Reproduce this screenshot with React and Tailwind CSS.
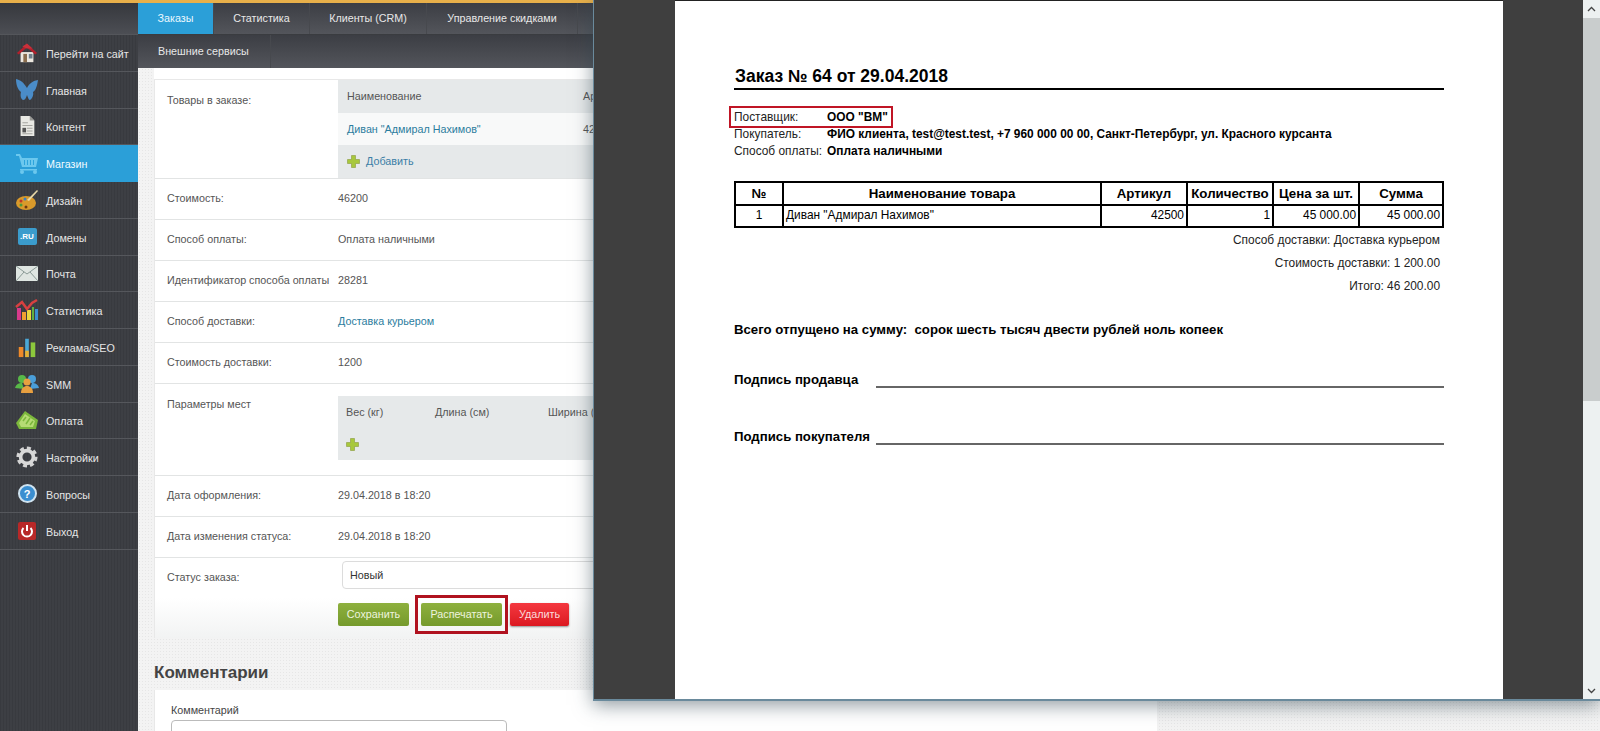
// App.jsx
import React from "react";

const IconHome = () => (
  <svg width="22" height="22" viewBox="0 0 24 24">
    <path d="M5 11h14v11H5z" fill="#ece8e0" />
    <path d="M1 12 12 2l11 10-2 1.500L12 6l-9 7.500z" fill="#b3202c" />
    <path d="M7 5 12 1.500 18 7l-6 0z" fill="#c9303a" />
    <path d="M8 13h4v9H8z" fill="#8a6d4d" />
    <path d="M14 13h4v5h-4z" fill="#6f7f8c" />
  </svg>
);

const IconButterfly = () => (
  <svg width="24" height="24" viewBox="0 0 24 24">
    <path d="M1 1c5 1 8 4 11 9 2-4 5-7 11-8-1 6-2 10-5 12 1 3-1 7-3 8-1 0-2-2-3-5-1 3-2 5-4 5-2-1-3-4-2-8C3 12 1 7 1 1z" fill="#4a8cc8" />
  </svg>
);

const IconDoc = () => (
  <svg width="20" height="22" viewBox="0 0 20 24">
    <path d="M3 1h10l5 5v17H3z" fill="#e9e9e4" />
    <path d="M13 1l5 5h-5z" fill="#9a9a96" />
    <path d="M5 8h6v1H5zM5 11h11v1H5zM10 14h6v1h-6zM10 17h6v1h-6zM5 20h11v1H5z" fill="#a5a5a0" />
    <path d="M5 14h4v5H5z" fill="#555" />
  </svg>
);

const IconCart = () => (
  <svg width="24" height="24" viewBox="0 0 24 24">
    <path d="M1 3h4l2 4h16l-2 9H7L4 5H1z" fill="#6cc8ee" />
    <path d="M9 9h1v5H9zM12 9h1v5h-1zM15 9h1v5h-1zM18 9h1v5h-1z" fill="#2ea4dc" />
    <path d="M5 18h17v1.500H5z" fill="#6cc8ee" />
    <circle cx="7" cy="21" r="2" fill="#6cc8ee" />
    <circle cx="20" cy="21" r="2" fill="#6cc8ee" />
  </svg>
);

const IconPalette = () => (
  <svg width="24" height="24" viewBox="0 0 24 24">
    <ellipse cx="11" cy="15" rx="10" ry="7" fill="#d99a2b" />
    <circle cx="6" cy="13" r="1.500" fill="#c0392b" />
    <circle cx="10" cy="11" r="1.500" fill="#3c7fc0" />
    <circle cx="6" cy="17" r="1.500" fill="#4b9b3c" />
    <circle cx="11" cy="19" r="1.500" fill="#6d3b12" />
    <path d="M22 2l1 1-9 10-2-1z" fill="#e8d8a8" />
  </svg>
);

const IconRu = () => (
  <div className="flex h-[17px] w-[19px] items-center justify-center rounded-[2px] bg-[#3b9ccc] text-[8px] font-bold text-white">.RU</div>
);

const IconMail = () => (
  <svg width="22" height="16" viewBox="0 0 22 16">
    <path d="M0 1h22v15H0z" fill="#dfe6e2" />
    <path d="M0 1l11 8 11-8M0 16l8-9M22 16l-8-9" fill="none" stroke="#8a9a96" strokeWidth="1" />
  </svg>
);

const IconStats = () => (
  <svg width="24" height="24" viewBox="0 0 24 24">
    <path d="M2 10h4v12H2z" fill="#d83a8c" />
    <path d="M7 14h4v8H7z" fill="#f0a030" />
    <path d="M12 12h4v10h-4z" fill="#e8d840" />
    <path d="M17 9h2v13h-2z" fill="#60b040" />
    <path d="M20 11h3v11h-3z" fill="#3a8ed0" />
    <path d="M1 9l6-5 5 7 5-6 5-3" fill="none" stroke="#d84040" strokeWidth="2.500" />
  </svg>
);

const IconBars = () => (
  <svg width="20" height="22" viewBox="0 0 20 24">
    <path d="M1 12h5v11H1z" fill="#ee8a2a" />
    <path d="M8 3h4v20H8z" fill="#4aa8d8" />
    <path d="M14 7h5v16h-5z" fill="#8cc83c" />
    <path d="M8 16h4v7H8z" fill="#e8b030" />
  </svg>
);

const IconPeople = () => (
  <svg width="24" height="20" viewBox="0 0 24 20">
    <circle cx="7" cy="5" r="4" fill="#58b848" />
    <circle cx="17" cy="5" r="4" fill="#4a9ed8" />
    <path d="M0 14c1-4 4-5 7-5l2 6z" fill="#58b848" />
    <path d="M24 14c-1-4-4-5-7-5l-2 6z" fill="#4a9ed8" />
    <circle cx="12" cy="8" r="3.500" fill="#e8a040" />
    <path d="M6 19c0-5 3-7 6-7s6 2 6 7z" fill="#e8a040" />
  </svg>
);

const IconMoney = () => (
  <svg width="22" height="20" viewBox="0 0 22 20">
    <path d="M0 13 9 1l13 9-2 9H3z" fill="#7cb83c" />
    <path d="M3 13l6-9 10 7-2 6H5z" fill="#b6dc74" />
    <path d="M7 11l3-4M10 14l4-6M14 15l3-4" fill="none" stroke="#7cb83c" strokeWidth="1.500" />
  </svg>
);

const IconGear = () => (
  <svg width="22" height="22" viewBox="0 0 24 24">
    <circle cx="12" cy="12" r="9" fill="none" stroke="#d4d4d4" strokeWidth="5" strokeDasharray="4 3" />
    <circle cx="12" cy="12" r="7" fill="none" stroke="#d8d8d8" strokeWidth="4" />
  </svg>
);

const IconHelp = () => (
  <div className="flex h-[19px] w-[19px] items-center justify-center rounded-full border-2 border-[#cfe3f0] bg-[#3a8ed0] text-[11px] font-bold text-white">?</div>
);

const IconPower = () => (
  <svg width="20" height="20" viewBox="0 0 20 20">
    <rect x="1" y="1" width="18" height="18" rx="2" fill="#b82828" />
    <path d="M6.500 7a5 5 0 1 0 7 0" fill="none" stroke="#fff" strokeWidth="2" />
    <path d="M10 4v6" stroke="#fff" strokeWidth="2" />
  </svg>
);

const PlusIcon = () => (
  <svg width="13" height="13" viewBox="0 0 13 13">
    <path d="M4.500 0.500h4v4h4v4h-4v4h-4v-4h-4v-4h4z" fill="#a8c83c" stroke="#8a9a3c" strokeWidth="0.600" />
  </svg>
);

const nav = [
  { label: "Перейти на сайт", icon: <IconHome /> },
  { label: "Главная", icon: <IconButterfly /> },
  { label: "Контент", icon: <IconDoc /> },
  { label: "Магазин", icon: <IconCart />, active: true },
  { label: "Дизайн", icon: <IconPalette /> },
  { label: "Домены", icon: <IconRu /> },
  { label: "Почта", icon: <IconMail /> },
  { label: "Статистика", icon: <IconStats /> },
  { label: "Реклама/SEO", icon: <IconBars /> },
  { label: "SMM", icon: <IconPeople /> },
  { label: "Оплата", icon: <IconMoney /> },
  { label: "Настройки", icon: <IconGear /> },
  { label: "Вопросы", icon: <IconHelp /> },
  { label: "Выход", icon: <IconPower /> },
];

const tabs = [
  { label: "Заказы", width: "w-[76px]", active: true },
  { label: "Статистика", width: "w-[96px]" },
  { label: "Клиенты (CRM)", width: "w-[117px]" },
  { label: "Управление скидками", width: "w-[151px]" },
];

function Row({ label, children, link }) {
  return (
    <div className="flex h-[41px] items-center border-b border-[#e2e4e4] pb-[1px] pl-[12px] text-[#555]">
      <div className="w-[171px] shrink-0">{label}</div>
      <div className={link ? "text-[#2b7c9e]" : ""}>{children}</div>
    </div>
  );
}

function Sidebar() {
  return (
    <aside className="flex w-[138px] shrink-0 flex-col bg-[#3d3f44] bg-[repeating-linear-gradient(90deg,rgba(0,0,0,0.08)_0_1px,transparent_1px_3px)] text-[#e6e6e6]">
      <div className="h-[32px] shrink-0 border-b border-[#54565b] bg-gradient-to-b from-[#36383d] to-[#4c4e54]" />
      {nav.map((item) => (
        <div
          key={item.label}
          className={
            "flex h-[36.75px] shrink-0 items-center border-b " +
            (item.active ? "border-[#2b9fd8] bg-[#2b9fd8] text-[#f2fbff]" : "border-[#55575c]")
          }
        >
          <div className="flex w-[46px] shrink-0 items-center justify-center pl-[8px]">{item.icon}</div>
          <span className="pt-[2px]">{item.label}</span>
        </div>
      ))}
    </aside>
  );
}

function TopTabs() {
  return (
    <div className="shrink-0 text-[#e8e8e8]">
      <div className="flex h-[32px] border-b border-[#3a3c40] bg-gradient-to-b from-[#3c3e44] to-[#53555b]">
        {tabs.map((t) => (
          <div
            key={t.label}
            className={
              t.width +
              " flex items-center justify-center border-r border-[#47494e] " +
              (t.active ? "bg-[#2b9fd8] text-[#eaf8ff]" : "")
            }
          >
            {t.label}
          </div>
        ))}
      </div>
      <div className="flex h-[33px] bg-gradient-to-b from-[#3c3e44] to-[#53555b]">
        <div className="flex w-[133px] items-center border-r border-[#47494e] pl-[20px]">Внешние сервисы</div>
      </div>
    </div>
  );
}

function OrderCard() {
  return (
    <div className="w-[1003px] bg-white pt-[11px]">
      <div className="border-l border-t border-[#e8e8e8] bg-white">
        <div className="flex h-[99px] border-b border-[#e2e4e4] pl-[12px] text-[#555]">
          <div className="w-[171px] shrink-0 pt-[12px]">Товары в заказе:</div>
          <div className="flex-1">
            <div className="flex h-[33px] items-center bg-[#e6e9ea] pl-[9px]">
              <div className="w-[236px]">Наименование</div>
              <div>Артикул</div>
            </div>
            <div className="flex h-[32px] items-center bg-[#f8f9f9] pl-[9px]">
              <div className="w-[236px] text-[#2b7c9e]">Диван "Адмирал Нахимов"</div>
              <div>42500</div>
            </div>
            <div className="flex h-[33px] items-center gap-[6px] bg-[#e6e9ea] pl-[9px]">
              <PlusIcon />
              <span className="text-[#3b7ea6]">Добавить</span>
            </div>
          </div>
        </div>
        <Row label="Стоимость:">46200</Row>
        <Row label="Способ оплаты:">Оплата наличными</Row>
        <Row label="Идентификатор способа оплаты">28281</Row>
        <Row label="Способ доставки:" link>Доставка курьером</Row>
        <Row label="Стоимость доставки:">1200</Row>
        <div className="flex h-[92px] border-b border-[#e2e4e4] pl-[12px] pt-[12px] text-[#555]">
          <div className="w-[171px] shrink-0">Параметры мест</div>
          <div className="h-[64px] flex-1 bg-[#e6e9ea]">
            <div className="flex h-[33px] items-center pl-[8px]">
              <div className="w-[89px]">Вес (кг)</div>
              <div className="w-[113px]">Длина (см)</div>
              <div>Ширина (см)</div>
            </div>
            <div className="flex h-[31px] items-center pl-[8px]">
              <PlusIcon />
            </div>
          </div>
        </div>
        <Row label="Дата оформления:">29.04.2018 в 18:20</Row>
        <Row label="Дата изменения статуса:">29.04.2018 в 18:20</Row>
        <div className="h-[80px] bg-gradient-to-b from-white from-50% to-[#f2f3f3] pl-[12px] text-[#555]">
          <div className="flex pt-[3px]">
            <div className="w-[175px] shrink-0 pt-[8px]">Статус заказа:</div>
            <div className="flex h-[28px] flex-1 items-center rounded-[4px] border border-[#dcdcdc] bg-white pl-[7px] text-[#333]">Новый</div>
          </div>
          <div className="flex items-center pl-[171px] pt-[6px] text-[#eef4df]">
            <div className="flex h-[23px] w-[71px] items-center justify-center rounded-[2px] bg-gradient-to-b from-[#8eb03e] to-[#759a2c]">Сохранить</div>
            <div className="ml-[6px] border-[3px] border-[#b0121f] p-[5px] px-[3px]">
              <div className="flex h-[23px] w-[81px] items-center justify-center rounded-[2px] bg-gradient-to-b from-[#8eb03e] to-[#759a2c]">Распечатать</div>
            </div>
            <div className="ml-[2px] flex h-[23px] w-[59px] items-center justify-center rounded-[2px] bg-gradient-to-b from-[#f4373f] to-[#dc1820] text-[#fbdcdc] shadow-[0_1px_2px_rgba(0,0,0,0.4)]">Удалить</div>
          </div>
        </div>
      </div>
    </div>
  );
}

function Comments() {
  return (
    <div className="w-[1003px]">
      <h2 className="flex h-[52px] items-center pt-[18px] text-[17px] font-bold text-[#444]">Комментарии</h2>
      <div className="h-[60px] border-l border-[#e8e8e8] bg-white pl-[16px] pt-[13px] text-[#444]">
        <div className="leading-[14px]">Комментарий</div>
        <div className="mt-[3px] h-[40px] w-[336px] rounded-[4px] border border-[#bbb] bg-white" />
      </div>
    </div>
  );
}

function OrderDoc() {
  const th = "border-2 border-black text-center text-[13.3px] font-bold";
  const td = "border-2 border-black px-[2px] text-[11.9px]";
  return (
    <div className="h-full w-[828px] shrink-0 border-t border-[#222] bg-white pl-[59px] pr-[59px] text-black">
      <h1 className="border-b-2 border-black pb-[2px] pl-[1px] pt-[65px] text-[17.5px] font-bold leading-[20px]">Заказ № 64 от 29.04.2018</h1>

      <div className="mt-[19px] grid grid-cols-[93px_1fr] gap-y-[1px] text-[11.9px] leading-[16px]">
        <div className="text-[#222]">Поставщик:</div>
        <div className="font-bold">ООО "ВМ"</div>
        <div className="text-[#222]">Покупатель:</div>
        <div className="font-bold">ФИО клиента, test@test.test, +7 960 000 00 00, Санкт-Петербург, ул. Красного курсанта</div>
        <div className="text-[#222]">Способ оплаты:</div>
        <div className="font-bold">Оплата наличными</div>
      </div>

      <table className="mt-[22px] w-[710px] table-fixed border-collapse">
        <thead>
          <tr className="h-[23px]">
            <th className={th + " w-[48px]"}>№</th>
            <th className={th + " w-[318px]"}>Наименование товара</th>
            <th className={th + " w-[86px]"}>Артикул</th>
            <th className={th + " w-[86px]"}>Количество</th>
            <th className={th + " w-[86px]"}>Цена за шт.</th>
            <th className={th}>Сумма</th>
          </tr>
        </thead>
        <tbody>
          <tr className="h-[22px]">
            <td className={td + " text-center"}>1</td>
            <td className={td}>Диван "Адмирал Нахимов"</td>
            <td className={td + " text-right"}>42500</td>
            <td className={td + " text-right"}>1</td>
            <td className={td + " text-right"}>45 000.00</td>
            <td className={td + " text-right"}>45 000.00</td>
          </tr>
        </tbody>
      </table>

      <div className="mt-[4px] flex flex-col gap-[7px] pr-[4px] text-right text-[11.9px] leading-[16px] text-[#222]">
        <div>Способ доставки: Доставка курьером</div>
        <div>Стоимость доставки: 1 200.00</div>
        <div>Итого: 46 200.00</div>
      </div>

      <div className="mt-[28px] text-[13.2px] font-bold leading-[16px]">Всего отпущено на сумму:&nbsp; сорок шесть тысяч двести рублей ноль копеек</div>

      <div className="mt-[34px] flex h-[16px] items-end text-[13.2px] font-bold leading-[16px]">
        <div className="w-[142px] shrink-0">Подпись продавца</div>
        <div className="flex-1 border-b-2 border-[#666]" />
      </div>
      <div className="mt-[41px] flex h-[16px] items-end text-[13.2px] font-bold leading-[16px]">
        <div className="w-[142px] shrink-0">Подпись покупателя</div>
        <div className="flex-1 border-b-2 border-[#666]" />
      </div>
    </div>
  );
}

function PrintPopup() {
  return (
    <div className="absolute left-[593px] top-0 flex h-[701px] w-[1007px] border-b-2 border-l border-[#6a8a9c] bg-[#3f3f3f] shadow-[0_4px_18px_rgba(50,70,80,0.55)]">
      <div className="w-[81px] shrink-0" />
      <OrderDoc />
      <div className="w-[80px] shrink-0" />
      <div className="flex w-[17px] shrink-0 flex-col bg-[#edf1f1] text-[#444]">
        <div className="flex h-[18px] items-center justify-center">
          <svg width="9" height="6" viewBox="0 0 9 6"><path d="M1 5l3.500-3.500L8 5" fill="none" stroke="#444" strokeWidth="1.300" /></svg>
        </div>
        <div className="h-[383px] bg-[#c9cdcd]" />
        <div className="flex-1" />
        <div className="flex h-[17px] items-center justify-center">
          <svg width="9" height="6" viewBox="0 0 9 6"><path d="M1 1l3.500 3.500L8 1" fill="none" stroke="#444" strokeWidth="1.300" /></svg>
        </div>
      </div>
    </div>
  );
}

export default function App() {
  return (
    <div className="relative flex h-[731px] w-[1600px] flex-col overflow-hidden font-['Liberation_Sans',Arial,sans-serif] text-[10.75px]">
      <div className="h-[3px] shrink-0 bg-[#e8b04a]" />
      <div className="flex min-h-0 flex-1">
        <Sidebar />
        <main className="flex min-w-0 flex-1 flex-col">
          <TopTabs />
          <div className="min-h-0 flex-1 overflow-hidden bg-[#f3f3f3] bg-[radial-gradient(#e6e6e6_1px,transparent_1px)] bg-[length:3px_3px] pl-[16px]">
            <OrderCard />
            <Comments />
          </div>
        </main>
      </div>
      <PrintPopup />
      {/* red highlight around the supplier line in the document */}
      <div className="absolute left-[729px] top-[106px] h-[22px] w-[164px] border-[2px] border-[#c01525]" />
    </div>
  );
}
